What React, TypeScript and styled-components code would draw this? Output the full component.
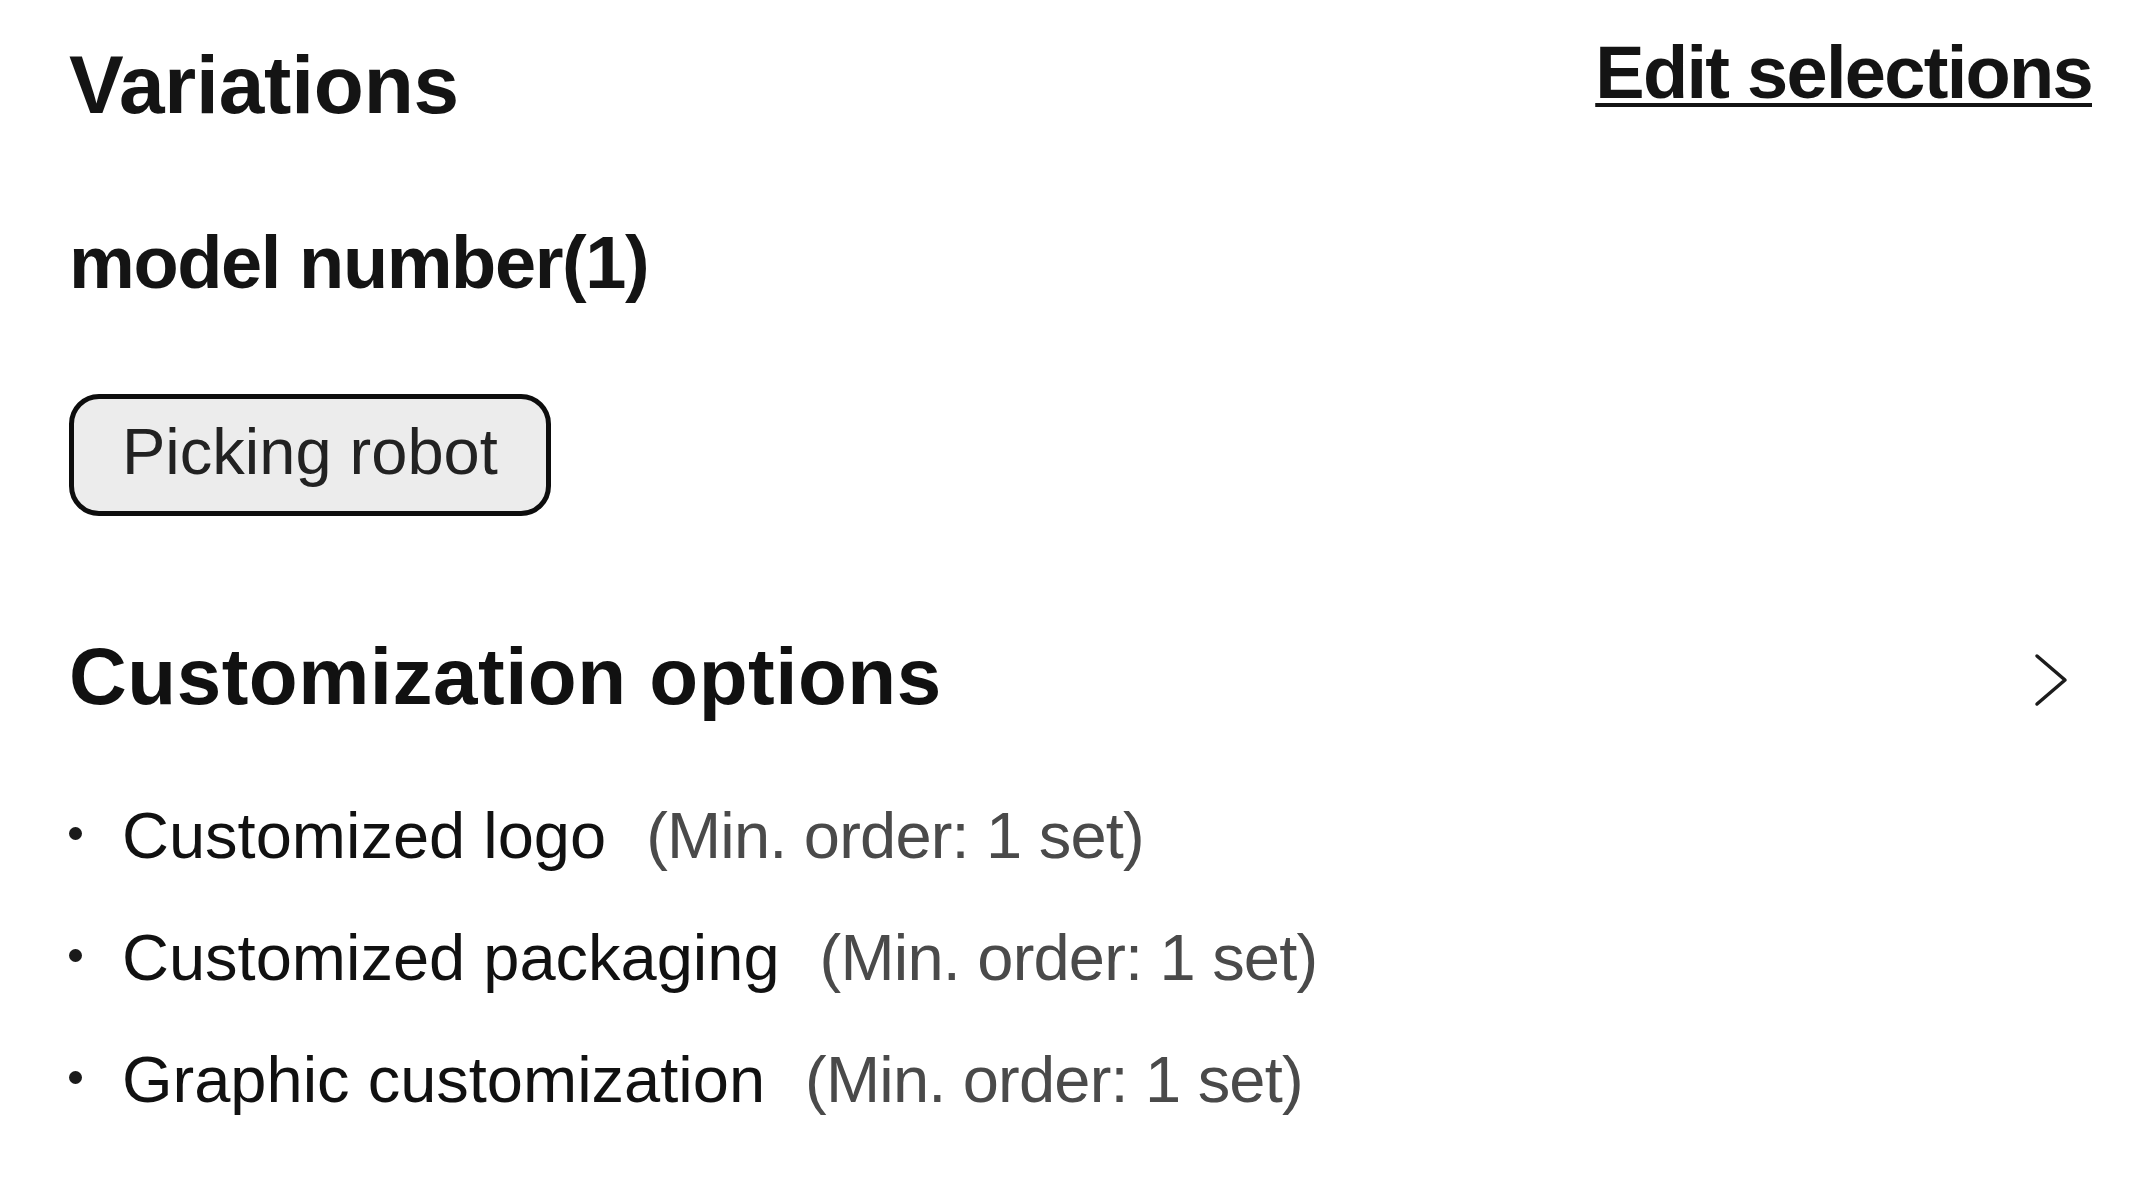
import styled, { createGlobalStyle } from "styled-components";

const GlobalStyle = createGlobalStyle`
    html, body {
        margin: 0;
        padding: 0;
        background: #ffffff;
    }
    body {
        font-family: "Liberation Sans", Arial, sans-serif;
        color: #111111;
    }
`;

const Page = styled.div`
    padding: 36px 60px 40px 69px;
    display: flex;
    flex-direction: column;
`;

const HeaderRow = styled.div`
    display: flex;
    justify-content: space-between;
    align-items: flex-start;
`;

const Title = styled.h1`
    margin: 8px 0 0;
    font-size: 82px;
    line-height: 1;
    font-weight: 700;
    letter-spacing: -0.2px;
    color: #141414;
`;

const EditLink = styled.a`
    font-size: 74px;
    line-height: 1;
    font-weight: 700;
    letter-spacing: -1.7px;
    color: #141414;
    text-decoration: underline;
    text-decoration-thickness: 4px;
    text-underline-offset: 5px;
    cursor: pointer;
`;

const SubTitle = styled.h2`
    margin: 100px 0 0;
    font-size: 74px;
    line-height: 1;
    font-weight: 700;
    letter-spacing: -1.4px;
    color: #141414;
`;

const Chips = styled.div`
    display: flex;
    gap: 24px;
    margin-top: 94px;
`;

const Chip = styled.button`
    box-sizing: border-box;
    height: 122px;
    padding: 0 48px 8px;
    display: flex;
    align-items: center;
    background: #ececec;
    border: 5px solid #0d0d0d;
    border-radius: 30px;
    font-family: "Liberation Sans", Arial, sans-serif;
    font-size: 65px;
    line-height: 1;
    color: #222222;
`;

const SectionRow = styled.div`
    display: flex;
    justify-content: space-between;
    align-items: center;
    margin-top: 121px;
`;

const SectionTitle = styled.h2`
    margin: 0;
    font-size: 80px;
    line-height: 1;
    font-weight: 700;
    letter-spacing: 0.5px;
    color: #111111;
`;

const Chevron = styled.svg`
    width: 36px;
    height: 56px;
    margin-right: 23px;
    margin-top: 6px;
`;

const OptionList = styled.ul`
    list-style: none;
    margin: 58px 0 0;
    padding: 0;
`;

const Option = styled.li`
    display: flex;
    align-items: center;
    height: 122px;
    font-size: 65px;
    line-height: 122px;
    white-space: nowrap;
`;

const Bullet = styled.span`
    width: 13px;
    height: 13px;
    border-radius: 50%;
    background: #1a1a1a;
    margin: 0 40px 5px 0;
    flex: none;
`;

const OptionName = styled.span`
    color: #111111;
`;

const MinOrder = styled.span`
    margin-left: 40px;
    color: #4a4a4a;
    letter-spacing: -0.8px;
`;

const options = [
    "Customized logo",
    "Customized packaging",
    "Graphic customization",
];

export default function App() {
    return (
        <>
            <GlobalStyle />
            <Page>
                <HeaderRow>
                    <Title>Variations</Title>
                    <EditLink>Edit selections</EditLink>
                </HeaderRow>

                <SubTitle>model number(1)</SubTitle>

                <Chips>
                    <Chip>Picking robot</Chip>
                </Chips>

                <SectionRow>
                    <SectionTitle>Customization options</SectionTitle>
                    <Chevron viewBox="0 0 36 56" fill="none">
                        <path d="M4 4 L32 28 L4 52" stroke="#1c1c1c" strokeWidth="3.5" strokeLinecap="round" strokeLinejoin="round" />
                    </Chevron>
                </SectionRow>

                <OptionList>
                    {options.map((name) => (
                        <Option key={name}>
                            <Bullet />
                            <OptionName>{name}</OptionName>
                            <MinOrder>(Min. order: 1 set)</MinOrder>
                        </Option>
                    ))}
                </OptionList>
            </Page>
        </>
    );
}
